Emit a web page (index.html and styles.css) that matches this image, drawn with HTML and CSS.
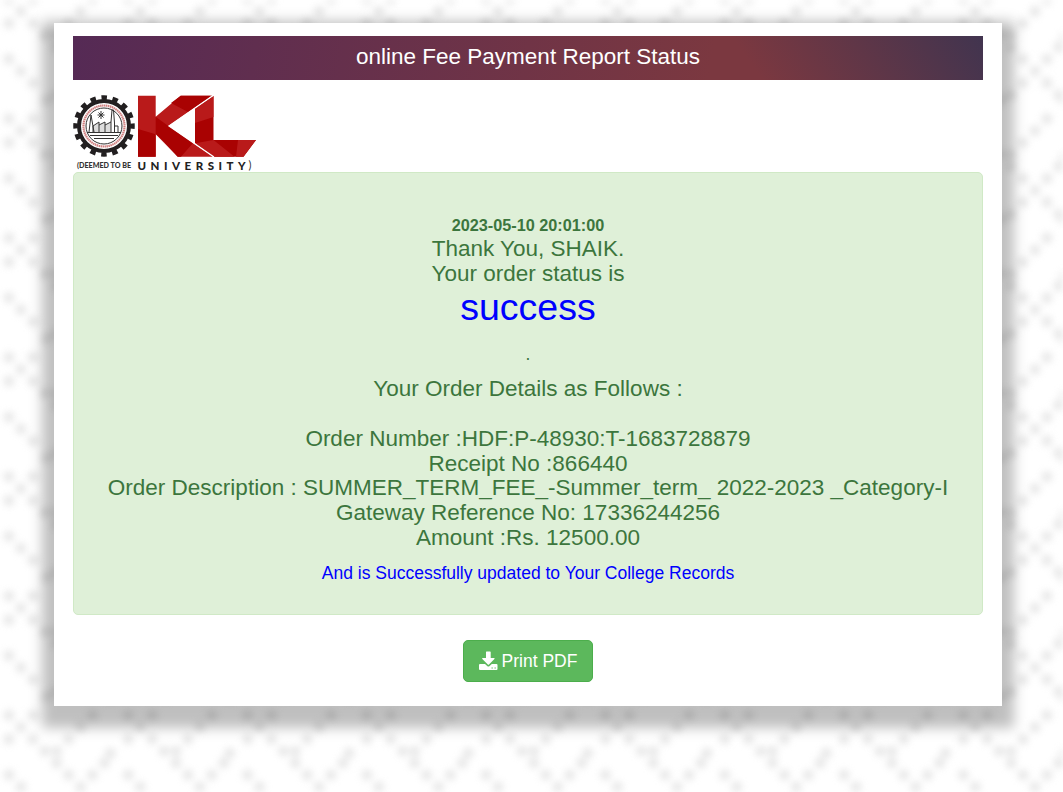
FILE: index.html
```html
<!DOCTYPE html>
<html lang="en">
<head>
<meta charset="utf-8">
<title>online Fee Payment Report Status</title>
<link rel="stylesheet" href="styles.css">
</head>
<body>
<svg class="backdrop" aria-hidden="true">
  <defs>
    <filter id="soft" x="0" y="0" width="100%" height="100%" color-interpolation-filters="sRGB"><feGaussianBlur stdDeviation="3.6"/></filter>
    <pattern id="weave" width="120" height="120" patternUnits="userSpaceOnUse" patternTransform="translate(-3 -12.500) scale(.9942)">
      <g fill="#dedede">
        <circle cx="12" cy="12" r="5.500"/><circle cx="36" cy="12" r="5.500"/><circle cx="24" cy="24" r="5.500"/><circle cx="12" cy="36" r="5.500"/><circle cx="36" cy="36" r="5.500"/>
        <circle cx="96" cy="12" r="5.500"/><circle cx="84" cy="24" r="5.500"/><circle cx="72" cy="36" r="5.500"/>
        <circle cx="48" cy="48" r="5.500"/><circle cx="60" cy="48" r="5.500"/><circle cx="60" cy="60" r="5.500"/>
        <circle cx="108" cy="60" r="5.500"/><circle cx="114" cy="50" r="5.500"/>
        <circle cx="12" cy="72" r="5.500"/><circle cx="24" cy="84" r="5.500"/><circle cx="36" cy="96" r="5.500"/>
        <circle cx="72" cy="72" r="5.500"/><circle cx="96" cy="72" r="5.500"/><circle cx="84" cy="84" r="5.500"/><circle cx="72" cy="96" r="5.500"/><circle cx="96" cy="96" r="5.500"/>
        <circle cx="60" cy="108" r="5.500"/><circle cx="50" cy="113" r="5.500"/><circle cx="108" cy="108" r="5.500"/><circle cx="114" cy="114" r="5.500"/>
      </g>
    </pattern>
  </defs>
  <g filter="url(#soft)"><rect width="100%" height="100%" fill="url(#weave)"/></g>
</svg>
<main class="sheet">
  <h1 class="title">online Fee Payment Report Status</h1>
  <svg class="logo" width="184" height="77" viewBox="0 0 184 77" role="img" aria-label="KL University">
    <circle cx="31" cy="31" r="28.500" fill="none" stroke="#221f20" stroke-width="4.500" stroke-dasharray="5.500 5.690" stroke-dashoffset="2.750"/>
    <circle cx="31" cy="31" r="25" fill="#fff" stroke="#221f20" stroke-width="4"/>
    <circle cx="31" cy="31" r="20.500" fill="none" stroke="#d07f7f" stroke-width="2.200" stroke-dasharray="1.500 .5"/>
    <circle cx="31" cy="31" r="18" fill="#fff" stroke="#333" stroke-width="1"/>
    <path d="M20 37v-6l6-4v3l6-3v3l6-3v10z" fill="#ddd"/>
    <path d="M14 37.500h34M17 40.500h28M21 43.500h20M16 37l2-17 3 17M38 27l1-12h1.500l1 13v9M20 37v-6l6-4v3l6-3v3l6-3v10M26 30v7M32 30v7M42 31h3v6M28 16v8M24.500 20h7M25.500 17.500l5 5M30.500 17.500l-5 5" fill="none" stroke="#333" stroke-width="1"/>
    <path d="M65 .7h17.700v21l25-21H139L95.300 31 140 61.700h-35.300l-22-22.400v22.400H65z" fill="#b91a1a"/>
    <path d="M65 34l17.700 5.300v22.400H65zM98 8l9.700-7.300H139L115 17zM82.700 21.700l12.600 9.300-3 17-9.600-9.300zM95.300 31L120 48l-12 13.700h-3.300L92 48z" fill="#a90202"/>
    <path d="M122 13.500L140.500 1v44H183l-12.500 16.700H141L122 48.300z" fill="#a90202"/>
    <path d="M122 13.500L140.500 1v21L122 28zM122 48.300l18.500-3.300 21 16.700H141zM165 45h18l-12.500 16.700H163z" fill="#b91a1a"/>
    <path d="M122 14.500v33.300L96.500 31z" fill="#fff"/>
    <path d="M140 .5L96 31l45 31" fill="none" stroke="#fff" stroke-width="1.200"/>
    <text class="deemed" x="4" y="73" textLength="54" lengthAdjust="spacingAndGlyphs">(DEEMED TO BE</text>
    <text class="university" x="64.500" y="75" textLength="108">UNIVERSITY</text>
    <text class="paren" x="175.500" y="74">)</text>
  </svg>
  <section class="notice">
    <p class="date">2023-05-10 20:01:00</p>
    <p class="line">Thank You, SHAIK.</p>
    <p class="line">Your order status is</p>
    <p class="status">success</p>
    <p class="dot">.</p>
    <p class="line">Your Order Details as Follows :</p>
    <div class="details">
      <p class="line">Order Number :HDF:P-48930:T-1683728879</p>
      <p class="line">Receipt No :866440</p>
      <p class="line">Order Description : SUMMER_TERM_FEE_-Summer_term_ 2022-2023 _Category-I</p>
      <p class="line">Gateway Reference No: 17336244256</p>
      <p class="line">Amount :Rs. 12500.00</p>
    </div>
    <p class="updated">And is Successfully updated to Your College Records</p>
  </section>
  <button class="print" type="button">
    <svg width="19" height="20" viewBox="0 0 19 20" aria-hidden="true"><path fill="#fff" fill-rule="evenodd" d="M7.500.5h3.600q.6 0 .6.600V7h3.500q.8.200.2 1L10 13.500q-.6.600-1.200 0L3.300 8q-.6-.8.300-1H7V1.100q0-.6.500-.6zM1 13h5l2.200 2q1.200 1 2.400 0l2.200-2H17.500q1 0 1 1v4q0 1-1 1H1q-1 0-1-1v-4q0-1 1-1zM12.500 16.500v1h1.300v-1zM15.500 16.500v1h1.300v-1z"/></svg>
    <span>Print PDF</span>
  </button>
</main>
</body>
</html>
```
FILE: styles.css
```css
* { box-sizing: border-box; }
body { margin: 0; height: 792px; overflow: hidden; background: #fff; font-family: "Liberation Sans", Arial, sans-serif; }
.backdrop { position: absolute; inset: 0; width: 100%; height: 100%; z-index: -1; opacity: .7; }
.sheet { width: 948px; height: 683px; margin: 23px 0 0 54px; padding: 13px 19px 0; background: #fff; box-shadow: 0 10px 12px 12px rgba(0,0,0,.25); display: flex; flex-direction: column; }
.title {
  margin: 0; height: 44px; flex: none; color: #fff;
  background:
    linear-gradient(100deg, #552a55 0%, #7b3840 97%, #7b3840 100%) 0 0 / 655px 44px no-repeat,
    linear-gradient(55deg, #7b3840 12%, #41344f 100%) 100% 0 / 255px 44px no-repeat;
  font-size: 22.5px; font-weight: 400; line-height: 42px; text-align: center;
}
.logo { display: block; flex: none; margin-top: 15px; overflow: visible; }
.deemed { font: 900 7px Lato, sans-serif; fill: #333; }
.university { font: 900 11.500px Lato, sans-serif; fill: #222; }
.paren { font: 400 11px Lato, sans-serif; fill: #333; }
.notice { flex: none; height: 443px; padding-top: 42px; border: 1px solid #d0e9c6; border-radius: 5px; background: #dff0d8; color: #3c763d; text-align: center; }
.notice p { margin: 0; white-space: nowrap; }
.notice .date { font-size: 16.250px; font-weight: 700; line-height: 20px; margin-bottom: 2px; }
.line { font-size: 22.500px; line-height: 24.750px; }
.status { color: #00f; font-size: 37.500px; line-height: 41px; }
.notice .dot { margin: 15px 0 12.600px; font-size: 17.500px; line-height: 22px; }
.details { margin-top: 25px; }
.updated { color: #00f; font-size: 17.500px; line-height: 25px; }
.notice .updated { margin-top: 10px; }
.print { align-self: center; display: flex; align-items: center; justify-content: center; gap: 4px; flex: none; width: 130px; height: 42px; margin-top: 25px; padding: 0; border: 1px solid #4cae4c; border-radius: 5px; background: #5cb85c; color: #fff; font: 17.500px "Liberation Sans", Arial, sans-serif; }
```
